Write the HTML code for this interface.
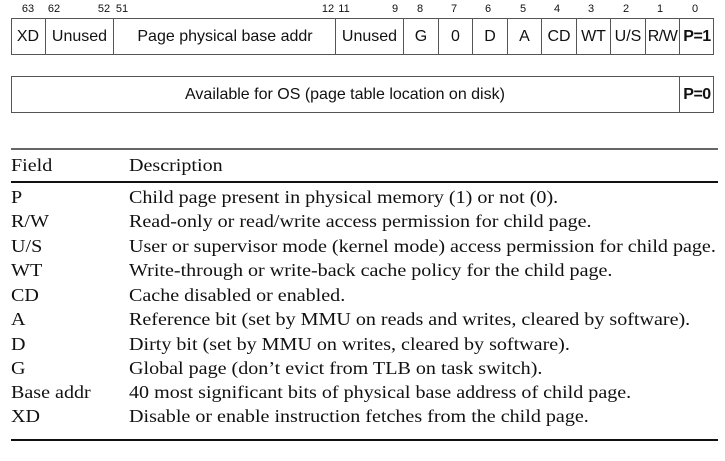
<!DOCTYPE html>
<html><head><style>
body{margin:0;width:725px;height:461px;background:#fff;position:relative;overflow:hidden;font-family:"Liberation Sans",sans-serif;color:#111}
.n{position:absolute;top:3px;font-size:11px;transform:translateX(-50%)}
.box{position:absolute;border:1.5px solid #555;box-sizing:border-box}
.c{position:absolute;top:0;height:100%;display:flex;align-items:center;justify-content:center;font-size:16px;border-left:1.5px solid #555;box-sizing:border-box;white-space:nowrap}
.t{position:absolute;font-family:"Liberation Serif",serif;font-size:18px;white-space:nowrap;transform:scaleX(1.115);transform-origin:0 0}
.r{position:absolute;left:11px;width:707px;background:#111}
</style></head><body>
<div class="n" style="left:28px">63</div>
<div class="n" style="left:54px">62</div>
<div class="n" style="left:104px">52</div>
<div class="n" style="left:122px">51</div>
<div class="n" style="left:328px">12</div>
<div class="n" style="left:344px">11</div>
<div class="n" style="left:395px">9</div>
<div class="n" style="left:420px">8</div>
<div class="n" style="left:454px">7</div>
<div class="n" style="left:488px">6</div>
<div class="n" style="left:523px">5</div>
<div class="n" style="left:557px">4</div>
<div class="n" style="left:591px">3</div>
<div class="n" style="left:626px">2</div>
<div class="n" style="left:660px">1</div>
<div class="n" style="left:695px">0</div>

<div class="box" style="left:11px;top:18px;width:703px;height:37px">
<div class="c" style="left:-1.5px;width:35px;border-left:none">XD</div>
<div class="c" style="left:33px;width:68px">Unused</div>
<div class="c" style="left:101px;width:223px">Page physical base addr</div>
<div class="c" style="left:323px;width:68px">Unused</div>
<div class="c" style="left:391px;width:35px">G</div>
<div class="c" style="left:426px;width:34px">0</div>
<div class="c" style="left:460px;width:35px">D</div>
<div class="c" style="left:495px;width:34px">A</div>
<div class="c" style="left:529px;width:35px">CD</div>
<div class="c" style="left:564px;width:34px">WT</div>
<div class="c" style="left:598px;width:35px">U/S</div>
<div class="c" style="left:633px;width:34px;letter-spacing:-0.5px">R/W</div>
<div class="c" style="left:667px;width:35px;font-weight:bold;letter-spacing:-0.5px">P=1</div>
</div>

<div class="box" style="left:11px;top:76px;width:703px;height:37px">
<div class="c" style="left:-1.5px;width:669px;border-left:none">Available for OS (page table location on disk)</div>
<div class="c" style="left:667px;width:35px;font-weight:bold;letter-spacing:-0.5px">P=0</div>
</div>

<div class="r" style="top:148px;height:2px;background:#666"></div>
<div class="r" style="top:181px;height:1.5px"></div>
<div class="r" style="top:439px;height:1.5px"></div>

<div class="t" style="left:11px;top:155px">Field</div><div class="t" style="left:129px;top:155px">Description</div>
<div class="t" style="left:11px;top:187px">P</div><div class="t" style="left:129px;top:187px">Child page present in physical memory (1) or not (0).</div>
<div class="t" style="left:11px;top:211px">R/W</div><div class="t" style="left:129px;top:211px">Read-only or read/write access permission for child page.</div>
<div class="t" style="left:11px;top:236px">U/S</div><div class="t" style="left:129px;top:236px">User or supervisor mode (kernel mode) access permission for child page.</div>
<div class="t" style="left:11px;top:260px">WT</div><div class="t" style="left:129px;top:260px">Write-through or write-back cache policy for the child page.</div>
<div class="t" style="left:11px;top:285px">CD</div><div class="t" style="left:129px;top:285px">Cache disabled or enabled.</div>
<div class="t" style="left:11px;top:309px">A</div><div class="t" style="left:129px;top:309px">Reference bit (set by MMU on reads and writes, cleared by software).</div>
<div class="t" style="left:11px;top:334px">D</div><div class="t" style="left:129px;top:334px">Dirty bit (set by MMU on writes, cleared by software).</div>
<div class="t" style="left:11px;top:358px">G</div><div class="t" style="left:129px;top:358px">Global page (don’t evict from TLB on task switch).</div>
<div class="t" style="left:11px;top:382px">Base addr</div><div class="t" style="left:129px;top:382px">40 most significant bits of physical base address of child page.</div>
<div class="t" style="left:11px;top:406px">XD</div><div class="t" style="left:129px;top:406px">Disable or enable instruction fetches from the child page.</div>
</body></html>
